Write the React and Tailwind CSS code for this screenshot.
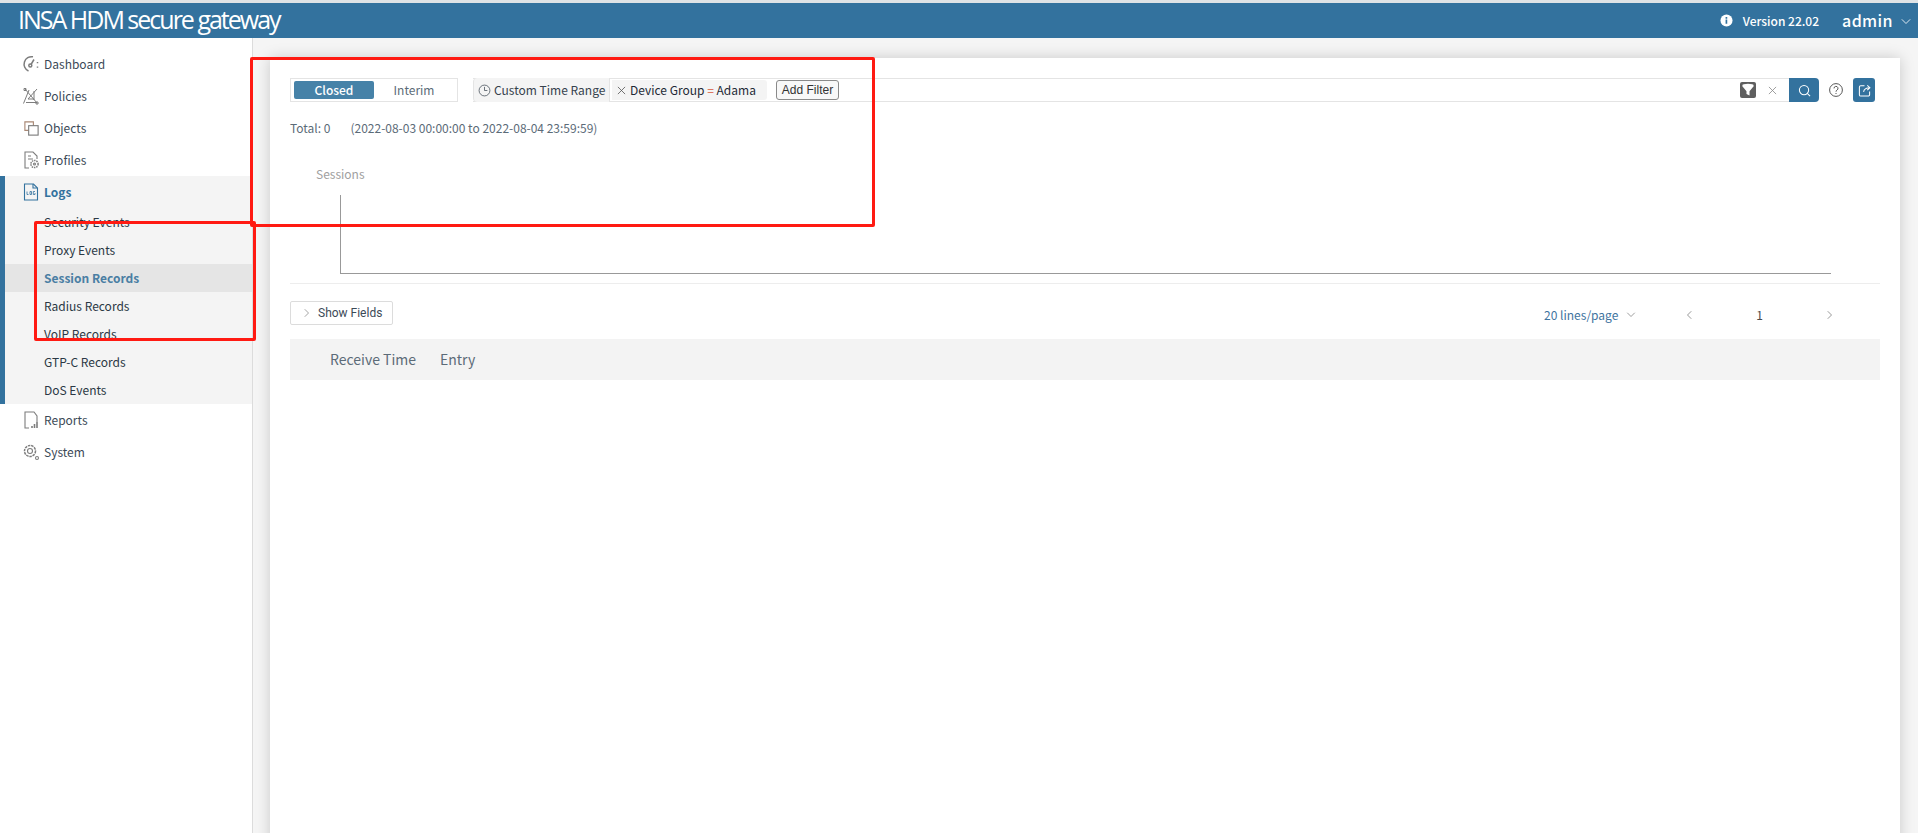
import React from "react";

const Ico = ({ children, className = "" }) => (
  <svg viewBox="0 0 18 18" fill="none" stroke="currentColor" strokeWidth="1" className={`shrink-0 ${className}`}>{children}</svg>
);

const DashIcon = () => (
  <svg viewBox="0 0 18 18" fill="none" stroke="#7d7d7d" strokeWidth="1.500" className="w-[18px] h-[18px] shrink-0">
    <path d="M6.500 16A7.500 7.500 0 0 1 11 1.800" />
    <path d="M9 9.500 L12 4.500" /><circle cx="8.300" cy="10.500" r="1.500" />
    <path d="M15.500 7v1.200M15.500 11.500v1.200" />
  </svg>
);
const PolicyIcon = () => (
  <svg viewBox="0 0 18 18" fill="none" stroke="#7d7d7d" strokeWidth="1" className="w-[18px] h-[18px] shrink-0">
    <path d="M3 2l12 14M1.500 16.500 L7 3M4 15.500h11M15 2 L6 12M12 4v9M6 12h6M2 1.500h2v2H2zM14 15h2v2h-2z" />
  </svg>
);
const ObjIcon = () => (
  <svg viewBox="0 0 18 18" fill="none" stroke="#7d7d7d" strokeWidth="1.200" className="w-[17px] h-[17px] shrink-0">
    <path d="M6 11H2V2h9v4" stroke="#a98874" /><rect x="6" y="6" width="10" height="10" />
  </svg>
);
const ProfileIcon = () => (
  <svg viewBox="0 0 18 18" fill="none" stroke="#7d7d7d" strokeWidth="1.100" className="w-[18px] h-[18px] shrink-0">
    <path d="M7 17H3V1h8l4 4v3" /><path d="M6 5h3M6 8h5" />
    <circle cx="12.500" cy="13" r="3.600" strokeWidth="1.500" strokeDasharray="1.500 0.800" /><circle cx="12.500" cy="13" r="1" />
  </svg>
);
const LogsIcon = () => (
  <svg viewBox="0 0 18 18" fill="none" stroke="#33729e" strokeWidth="1.100" className="w-[18px] h-[18px] shrink-0">
    <path d="M2.500 17V1h9l4 4v12z" /><path d="M11 1v4h4" />
    <path d="M5 8.500v3h1.500M8 8.500h1.500v3H8zM13 8.500h-1.700v3H13v-1.500" strokeWidth="0.800" />
  </svg>
);
const ReportIcon = () => (
  <svg viewBox="0 0 18 18" fill="none" stroke="#7d7d7d" strokeWidth="1.100" className="w-[18px] h-[18px] shrink-0">
    <path d="M7 17H3V1h9l3 4v6" /><path d="M10 17v-2M12.500 17v-4M15 17v-6" strokeWidth="1.600" />
  </svg>
);
const SystemIcon = () => (
  <svg viewBox="0 0 18 18" fill="none" stroke="#7d7d7d" strokeWidth="1.100" className="w-[18px] h-[18px] shrink-0">
    <circle cx="8" cy="8" r="5.500" strokeDasharray="2.500 0.800" strokeWidth="1.500" /><circle cx="8" cy="8" r="2.500" />
    <circle cx="15" cy="15" r="1.500" />
  </svg>
);

const top1 = [["Dashboard", DashIcon], ["Policies", PolicyIcon], ["Objects", ObjIcon], ["Profiles", ProfileIcon]];
const subs = ["Security Events", "Proxy Events", "Session Records", "Radius Records", "VoIP Records", "GTP-C Records", "DoS Events"];

const NavItem = ({ label, Icon }) => (
  <div className="h-[32px] flex items-center pl-[22px] gap-[4px] text-[12px] text-[#3c4a57]">
    <span className="w-[18px] flex justify-center"><Icon /></span>
    <span>{label}</span>
  </div>
);

export default function App() {
  return (
    <div className="relative w-full h-[833px] overflow-hidden bg-[#f5f5f5] flex flex-col font-['Noto_Sans_CJK_SC','Noto_Sans',sans-serif]">
      <div className="h-[3px] bg-[#dfe3e6] shrink-0" />
      <header className="h-[35px] shrink-0 bg-[#33729e] flex items-center text-white pl-[18px] pr-[7px]">
        <span className="text-[25px] leading-[35px] tracking-[-2px] font-['Open_Sans',sans-serif] -mt-[3px]">INSA HDM secure gateway</span>
        <div className="ml-auto flex items-center">
          <svg viewBox="0 0 14 14" className="w-[13px] h-[13px]"><circle cx="7" cy="7" r="6.500" fill="#fff" /><path d="M6 6h1.800v4.500H6zM6 3.200h1.800v1.800H6z" fill="#33729e" /></svg>
          <span className="ml-[10px] text-[12px] font-medium">Version 22.02</span>
          <span className="ml-[23px] text-[16px] font-medium tracking-[0.4px] -mt-[2px]">admin</span>
          <svg viewBox="0 0 12 12" fill="none" stroke="#fff" strokeWidth="1" className="ml-[8px] w-[10px] h-[10px]"><path d="M1 4l5 5 5-5" /></svg>
        </div>
      </header>

      <div className="flex flex-1 min-h-0">
        <aside className="w-[253px] shrink-0 bg-white border-r border-[#dcdcdc] pt-[10px]">
          {top1.map(([l, I]) => <NavItem key={l} label={l} Icon={I} />)}
          <div className="h-[228px] bg-[#f4f4f4] border-l-[5px] border-[#33729e]">
            <div className="h-[32px] flex items-center pl-[17px] gap-[4px] text-[12px] font-bold text-[#33729e]">
              <span className="w-[18px] flex justify-center"><LogsIcon /></span>
              <span>Logs</span>
            </div>
            {subs.map((s) => (
              <div key={s} className={`h-[28px] flex items-center pl-[39px] text-[12px] ${s === "Session Records" ? "bg-[#e5e5e5] font-bold text-[#4a7ea3]" : "text-[#2b3844]"}`}>{s}</div>
            ))}
          </div>
          <NavItem label="Reports" Icon={ReportIcon} />
          <NavItem label="System" Icon={SystemIcon} />
        </aside>

        <main className="flex-1 min-w-0 pl-[17px] pr-[18px] pt-[20px]">
          <div className="h-[800px] bg-white shadow-[0_0_14px_rgba(0,0,0,0.18)] pl-[20px] pr-[20px] pt-[20px]">
            <div className="flex items-start h-[24px]">
              <div className="w-[168px] h-[24px] border border-[#e4e4e4] flex items-center pl-[3px]">
                <div className="w-[80px] h-[18px] bg-[#4682a8] rounded-[2px] text-white text-[12px] font-medium flex items-center justify-center">Closed</div>
                <div className="w-[80px] text-center text-[12px] text-[#5c6b78]">Interim</div>
              </div>
              <div className="ml-[15px] flex-1 h-[24px] border-y border-[#e4e4e4] flex items-center">
                <div className="w-[137px] h-[24px] -my-px bg-[#f4f4f4] border-x border-[#e4e4e4] rounded-l-[4px] flex items-center pl-[4px] text-[12px] text-[#36424d] shrink-0">
                  <Ico className="w-[13px] h-[13px]"><circle cx="9" cy="9" r="7.500" /><path d="M9 4v5h4" /></Ico>
                  <span className="ml-[3px] whitespace-nowrap">Custom Time Range</span>
                </div>
                <div className="ml-[2px] w-[155px] h-[20px] bg-[#f4f4f4] rounded-r-[3px] flex items-center pl-[5px] text-[12px] text-[#1e2a36] shrink-0">
                  <svg viewBox="0 0 10 10" stroke="#555" strokeWidth="0.900" className="w-[9px] h-[9px]"><path d="M1 1l8 8M9 1l-8 8" /></svg>
                  <span className="ml-[4px] whitespace-nowrap">Device Group <span className="text-[#d9583b]">=</span> Adama</span>
                </div>
                <button className="ml-[9px] w-[63px] h-[20px] border border-[#8a8a8a] rounded-[3px] bg-[#f8f8f8] text-[12px] leading-[17px] text-[#333] font-['Liberation_Sans',sans-serif]">Add Filter</button>
                <div className="ml-auto flex items-center pr-[12px]">
                  <span className="w-[16px] h-[16px] bg-[#5f5f5f] rounded-[2px] flex items-center justify-center">
                    <svg viewBox="0 0 12 12" className="w-[14px] h-[14px]"><ellipse cx="6" cy="2" rx="5" ry="1.300" fill="#fff" /><path d="M1 2.500h10L7.300 7v3.800L4.700 9.500V7z" fill="#fff" /></svg>
                  </span>
                  <svg viewBox="0 0 10 10" stroke="#8a8a8a" strokeWidth="0.900" className="ml-[12px] w-[9px] h-[9px]"><path d="M1 1l8 8M9 1l-8 8" /></svg>
                </div>
              </div>
              <div className="w-[30px] h-[24px] bg-[#33729e] rounded-r-[4px] flex items-center justify-center shrink-0">
                <svg viewBox="0 0 14 14" fill="none" stroke="#fff" strokeWidth="1.100" className="w-[13px] h-[13px]"><circle cx="6.500" cy="6.500" r="5" /><path d="M10 10l3 3" /></svg>
              </div>
              <div className="ml-[10px] h-[24px] w-[14px] flex items-center justify-center shrink-0">
                <svg viewBox="0 0 14 14" fill="none" stroke="#444" strokeWidth="0.900" className="w-[14px] h-[14px]"><circle cx="7" cy="7" r="6.400" /><path d="M5 5.400a2 2 0 1 1 3 1.700c-.7.400-1 .800-1 1.600M7 10v1" /></svg>
              </div>
              <div className="ml-[10px] w-[22px] h-[24px] bg-[#33729e] rounded-[3px] flex items-center justify-center shrink-0 mr-[5px]">
                <svg viewBox="0 0 14 14" fill="none" stroke="#fff" strokeWidth="1.100" className="w-[13px] h-[13px]"><path d="M7 2H3a1.500 1.500 0 0 0-1.500 1.500v8A1.500 1.500 0 0 0 3 13h8a1.500 1.500 0 0 0 1.500-1.500V8" /><path d="M6 8.500C6.500 5.500 9 4 12.500 4M10 1.500 12.800 4 10 6.500" /></svg>
              </div>
            </div>

            <div className="mt-[16px] h-[20px] flex items-center text-[12px] text-[#5c6b78]">
              <span>Total: 0</span>
              <span className="ml-[20px]">(2022-08-03 00:00:00 to 2022-08-04 23:59:59)</span>
            </div>

            <div className="mt-[26px] pl-[26px] text-[12px] leading-[20px] text-[#a0a0a0]">Sessions</div>
            <div className="mt-[11px] ml-[50px] mr-[49px] h-[79px] border-l border-b border-[#999]" />
            <div className="mt-[9px] h-px bg-[#ededed]" />

            <div className="mt-[17px] h-[24px] flex items-start">
              <button className="w-[103px] h-[24px] border border-[#dcdcdc] rounded-[2px] flex items-center pl-[13px] text-[12px] text-[#3c4a57] font-['Roboto',sans-serif]">
                <svg viewBox="0 0 8 12" fill="none" stroke="#777" strokeWidth="0.900" className="w-[6px] h-[10px]"><path d="M1 1l5 5-5 5" /></svg>
                <span className="ml-[8px] whitespace-nowrap">Show Fields</span>
              </button>
              <div className="ml-auto flex items-center h-[24px] mt-[2px] text-[12px]">
                <span className="text-[#3f74a0]">20 lines/page</span>
                <svg viewBox="0 0 12 8" fill="none" stroke="#6f6f6f" strokeWidth="0.900" className="ml-[8px] w-[10px] h-[6px]"><path d="M1 1l5 5 5-5" /></svg>
                <svg viewBox="0 0 8 12" fill="none" stroke="#666" strokeWidth="0.900" className="ml-[50px] w-[6px] h-[10px]"><path d="M7 1L2 6l5 5" /></svg>
                <span className="ml-[64px] text-[12px] text-[#4a4a4a]">1</span>
                <svg viewBox="0 0 8 12" fill="none" stroke="#666" strokeWidth="0.900" className="ml-[64px] w-[6px] h-[10px] mr-[47px]"><path d="M1 1l5 5-5 5" /></svg>
              </div>
            </div>

            <div className="mt-[14px] h-[41px] bg-[#f3f3f3] flex items-center text-[14px] text-[#5c6b78]">
              <span className="ml-[40px]">Receive Time</span>
              <span className="ml-[24px]">Entry</span>
            </div>
          </div>
        </main>
      </div>

      <div className="absolute left-[250px] top-[57px] w-[625px] h-[170px] border-[3px] border-[#ff1a12] rounded-[2px] pointer-events-none" />
      <div className="absolute left-[34px] top-[221px] w-[222px] h-[120px] border-[3px] border-[#ff1a12] rounded-[2px] pointer-events-none" />
    </div>
  );
}
